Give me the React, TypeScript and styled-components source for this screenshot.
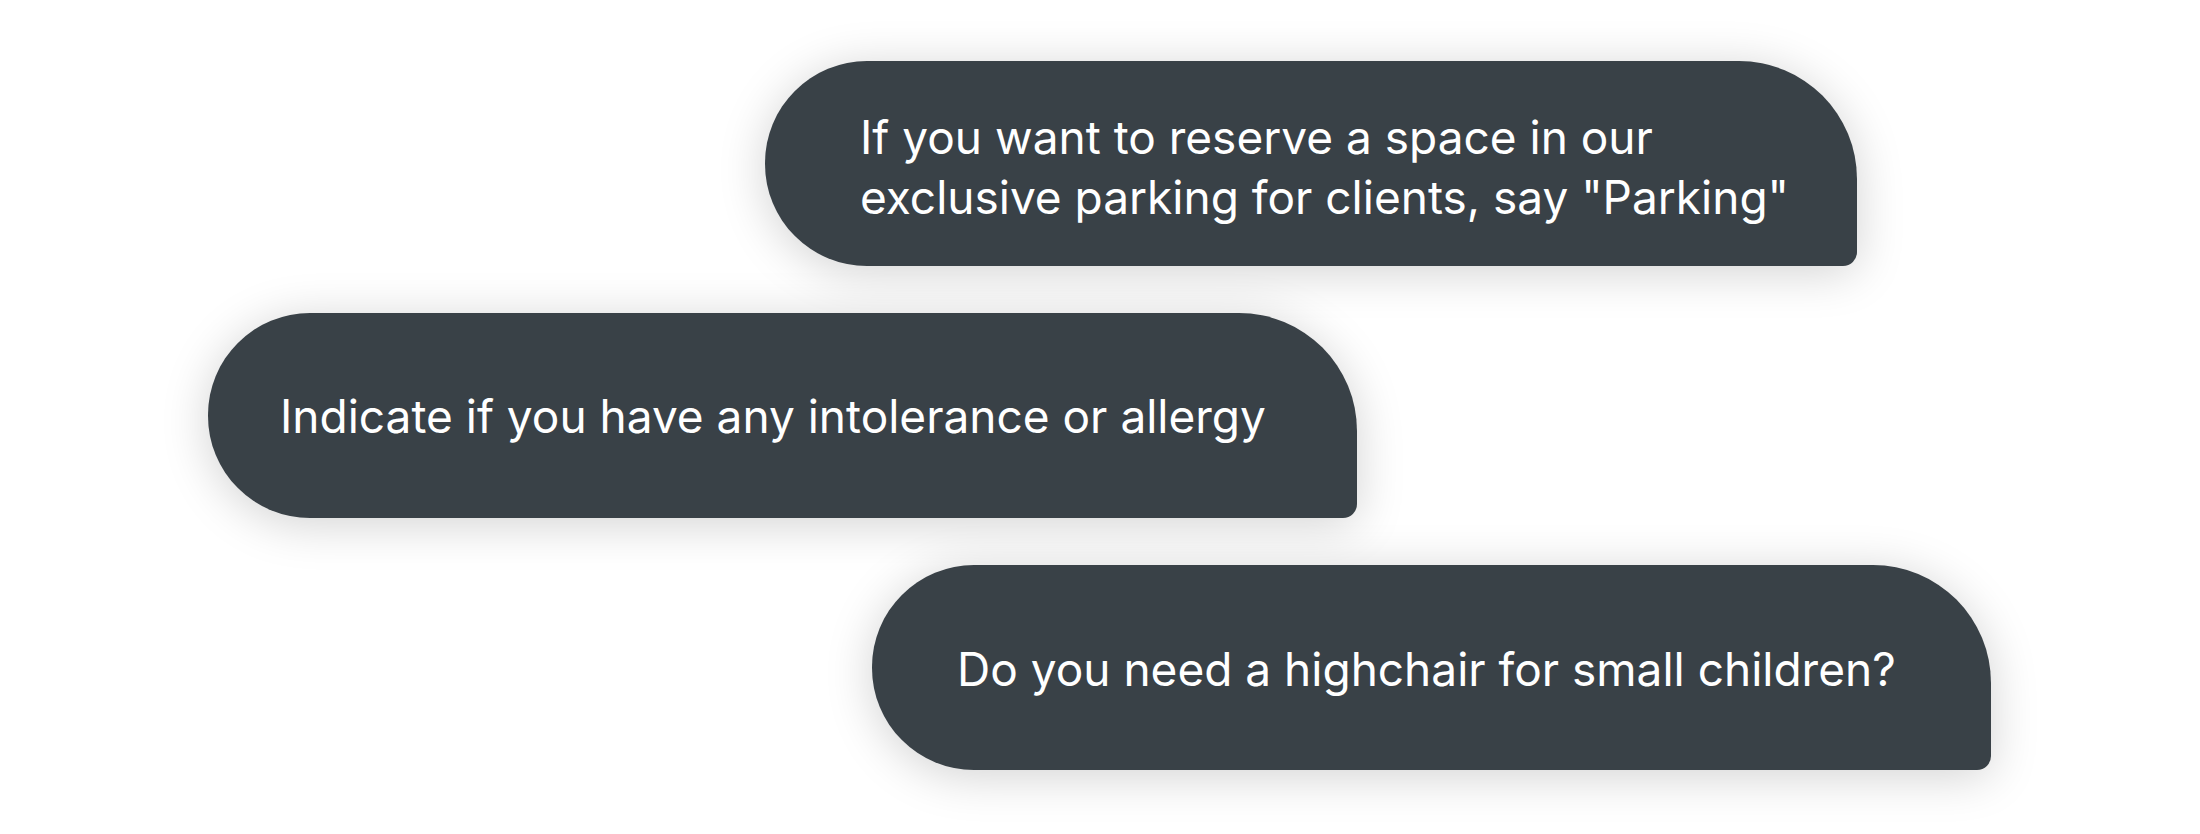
import React from "react";
import styled, { createGlobalStyle } from "styled-components";

const Global = createGlobalStyle`
  html, body { margin: 0; padding: 0; background: #ffffff; }
  body { font-family: "Inter", "Open Sans", sans-serif; }
`;

const Page = styled.main`
  width: 2200px;
  height: 834px;
  box-sizing: border-box;
  padding-top: 61px;
  display: flex;
  flex-direction: column;
  align-items: flex-start;
  gap: 47px;
  background: #ffffff;
  overflow: hidden;
`;

const Bubble = styled.div<{ $left: number; $width: number; $pad: number; $top: number }>`
  margin-left: ${(p) => p.$left}px;
  width: ${(p) => p.$width}px;
  height: 205px;
  box-sizing: border-box;
  padding-left: ${(p) => p.$pad}px;
  padding-top: ${(p) => p.$top}px;
  display: flex;
  align-items: center;
  background: #394147;
  color: #ffffff;
  border-radius: 102px 118px 14px 102px;
  box-shadow: 0 6px 48px rgba(0, 0, 0, 0.18);
`;

const Text = styled.p`
  margin: 0;
  font-family: "Inter", "Open Sans", sans-serif;
  font-size: 46px;
  line-height: 60px;
  font-weight: 400;
  letter-spacing: 0;
  white-space: nowrap;
`;

const messages = [
  { left: 765, width: 1092, pad: 95, top: 6, lines: ["If you want to reserve a space in our", 'exclusive parking for clients, say "Parking"'] },
  { left: 208, width: 1149, pad: 72, top: 0, lines: ["Indicate if you have any intolerance or allergy"] },
  { left: 872, width: 1119, pad: 85, top: 2, lines: ["Do you need a highchair for small children?"] },
];

export default function App() {
  return (
    <>
      <Global />
      <Page>
        {messages.map((m, i) => (
          <Bubble key={i} $left={m.left} $width={m.width} $pad={m.pad} $top={m.top}>
            <Text>
              {m.lines.map((l, j) => (
                <React.Fragment key={j}>
                  {l}
                  {j < m.lines.length - 1 && <br />}
                </React.Fragment>
              ))}
            </Text>
          </Bubble>
        ))}
      </Page>
    </>
  );
}
